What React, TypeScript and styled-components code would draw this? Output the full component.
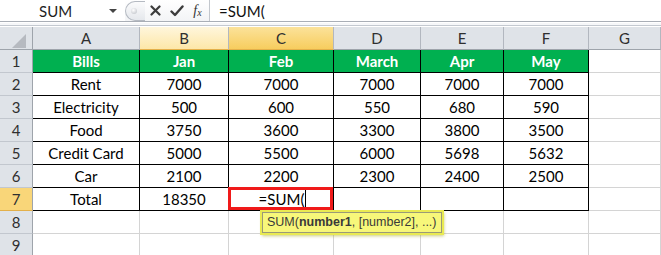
import * as React from 'react';
import styled, { createGlobalStyle, css } from 'styled-components';

const GlobalStyle = createGlobalStyle`
  html, body {
    margin: 0;
    padding: 0;
    background: #ffffff;
    overflow: hidden;
  }
  body {
    font-family: Lato, 'Liberation Sans', sans-serif;
  }
`;

const Wrapper = styled.div`
  width: 661px;
  height: 255px;
  overflow: hidden;
  background: #ffffff;
`;

const FormulaBar = styled.div`
  display: flex;
  align-items: stretch;
  height: 21px;
  border-bottom: 1px solid #a9aeb6;
  background: #ffffff;
`;

const NameBox = styled.div`
  width: 125px;
  display: flex;
  align-items: center;
  font-size: 15px;
  color: #1e1e1e;
`;

const NameText = styled.span`
  flex: 1;
  padding-left: 39px;
`;

const DropArrow = styled.span`
  width: 0;
  height: 0;
  border-left: 4px solid transparent;
  border-right: 4px solid transparent;
  border-top: 4px solid #444;
  margin-right: 8px;
`;

const Buttons = styled.div`
  width: 84px;
  display: flex;
  align-items: center;
  border-right: 1px solid #c3c7cd;
  background: linear-gradient(#ffffff, #f3f4f6);
`;

const Grip = styled.div`
  box-sizing: border-box;
  width: 20px;
  height: 20px;
  border: 1px solid #b5bac2;
  border-right: 0;
  border-radius: 10px 0 0 10px;
  display: flex;
  align-items: center;
  padding-left: 5px;
  background: linear-gradient(#fbfbfc, #e5e8ec);
`;

const Dot = styled.span`
  width: 6px;
  height: 6px;
  border-radius: 50%;
  background: radial-gradient(circle at 40% 35%, #ffffff, #b8bcc2);
`;

const IconBtn = styled.span`
  width: 21px;
  display: flex;
  align-items: center;
  justify-content: center;
  color: #3c3c3c;
`;

const Fx = styled.span`
  font-family: 'Liberation Serif', serif;
  font-style: italic;
  font-size: 14px;
  color: #333;
  line-height: 1;

  sub {
    font-size: 10px;
    vertical-align: -1px;
  }
`;

const FormulaText = styled.div`
  flex: 1;
  display: flex;
  align-items: center;
  padding-left: 9px;
  font-size: 15px;
  color: #111;
`;

const Band = styled.div`
  box-sizing: border-box;
  height: 3px;
  margin-top: 1px;
  border-bottom: 1px solid #c4c9d0;
  background: #f6f7f9;
`;

const Sheet = styled.div`
  display: grid;
  grid-template-columns: 33px 107px 89px 105px 87px 83px 85px 1fr;
  grid-auto-rows: 23px;
  margin-top: 1px;
`;

type HeadTone = 'plain' | 'hover' | 'active';

const toneBg = {
  plain: '#dfe3e8',
  hover: 'linear-gradient(#fff6dc, #fde7a8)',
  active: 'linear-gradient(#fbe29a, #f7cd5e)',
};

const ColHead = styled.div<{ $tone?: HeadTone }>`
  box-sizing: border-box;
  display: flex;
  align-items: center;
  justify-content: center;
  font-size: 15px;
  color: #2f2f2f;
  background: ${p => toneBg[p.$tone || 'plain']};
  border-right: 1px solid #b2b7bf;
  border-bottom: 1px solid ${p => (p.$tone && p.$tone !== 'plain' ? '#e3b04a' : '#9ea4ab')};
`;

const RowHead = styled(ColHead)`
  border-right: 1px solid #9ea4ab;
  border-bottom: 1px solid ${p => (p.$tone === 'active' ? '#e3b04a' : '#c2c7ce')};
  background: ${p => (p.$tone === 'active' ? '#f9d679' : '#dfe3e8')};
`;

const Corner = styled(ColHead)`
  border-right: 1px solid #9ea4ab;
`;

const CornerTriangle = styled.span`
  width: 0;
  height: 0;
  border-left: 14px solid transparent;
  border-bottom: 14px solid #b6bac0;
  margin: 6px 0 0 6px;
`;

type CellKind = 'empty' | 'head' | 'data';

const Cell = styled.div<{ $kind: CellKind; $selected?: boolean }>`
  box-sizing: border-box;
  display: flex;
  align-items: center;
  justify-content: center;
  font-size: 15px;
  color: #000;
  position: relative;
  border-right: 1px solid #d4d4d4;
  border-bottom: 1px solid #d4d4d4;

  ${p =>
    p.$kind === 'head' &&
    css`
      background: #00b050;
      color: #ffffff;
      font-weight: 700;
      border-right-color: #000;
      border-bottom-color: #000;
    `}

  ${p =>
    p.$kind === 'data' &&
    css`
      border-right-color: #000;
      border-bottom-color: #000;
    `}

  ${p =>
    p.$selected &&
    css`
      box-shadow: inset 0 0 0 3px #f01a1a;
      margin: -1px 0 0 -1px;
      padding-left: 4px;
    `}
`;

const Caret = styled.span`
  display: inline-block;
  width: 1px;
  height: 17px;
  background: #000;
  margin-left: 1px;
`;

const Tooltip = styled.div`
  position: absolute;
  top: 25px;
  left: 34px;
  z-index: 2;
  white-space: nowrap;
  font-family: 'Liberation Sans', Arial, sans-serif;
  font-size: 12.5px;
  color: #3a3a3a;
  background: #f7f77a;
  border: 1px solid #9a9a78;
  padding: 2px 4px 3px 4px;
  box-shadow: 0 0 0 2px #e9ea52, 1px 2px 3px 1px rgba(170, 170, 40, 0.6);

  b {
    font-weight: 700;
  }
`;

const cols = ['A', 'B', 'C', 'D', 'E', 'F', 'G'];

const table: string[][] = [
  ['Bills', 'Jan', 'Feb', 'March', 'Apr', 'May'],
  ['Rent', '7000', '7000', '7000', '7000', '7000'],
  ['Electricity', '500', '600', '550', '680', '590'],
  ['Food', '3750', '3600', '3300', '3800', '3500'],
  ['Credit Card', '5000', '5500', '6000', '5698', '5632'],
  ['Car', '2100', '2200', '2300', '2400', '2500'],
  ['Total', '18350', '', '', '', ''],
];

const colTone = (c: string): HeadTone => (c === 'B' ? 'hover' : c === 'C' ? 'active' : 'plain');

export default function App() {
  const rows = Array.from({ length: 9 }, (_, i) => i + 1);

  return (
    <Wrapper>
      <GlobalStyle />
      <FormulaBar>
        <NameBox>
          <NameText>SUM</NameText>
          <DropArrow />
        </NameBox>
        <Buttons>
          <Grip>
            <Dot />
          </Grip>
          <IconBtn>
            <svg width="11" height="11" viewBox="0 0 11 11">
              <path d="M1.5 1.5 L9.5 9.5 M9.5 1.5 L1.5 9.5" stroke="#3c3c3c" strokeWidth="2.2" strokeLinecap="round" />
            </svg>
          </IconBtn>
          <IconBtn>
            <svg width="14" height="12" viewBox="0 0 14 12">
              <path d="M1.5 6.5 L5 10 L12.5 1.5" fill="none" stroke="#3c3c3c" strokeWidth="2.4" strokeLinecap="round" strokeLinejoin="round" />
            </svg>
          </IconBtn>
          <IconBtn>
            <Fx>
              f<sub>x</sub>
            </Fx>
          </IconBtn>
        </Buttons>
        <FormulaText>=SUM(</FormulaText>
      </FormulaBar>
      <Band />
      <Sheet>
        <Corner>
          <CornerTriangle />
        </Corner>
        {cols.map(c => (
          <ColHead key={c} $tone={colTone(c)}>
            {c}
          </ColHead>
        ))}
        {rows.map(r => (
          <React.Fragment key={r}>
            <RowHead $tone={r === 7 ? 'active' : 'plain'}>{r}</RowHead>
            {cols.map((c, ci) => {
              const inTable = r <= 7 && ci < 6;
              const value = inTable ? table[r - 1][ci] : '';
              const kind: CellKind = !inTable ? 'empty' : r === 1 ? 'head' : 'data';
              if (r === 7 && c === 'C') {
                return (
                  <Cell key={c} $kind={kind} $selected>
                    =SUM(
                    <Caret />
                    <Tooltip>
                      SUM(<b>number1</b>, [number2], ...)
                    </Tooltip>
                  </Cell>
                );
              }
              return (
                <Cell key={c} $kind={kind}>
                  {value}
                </Cell>
              );
            })}
          </React.Fragment>
        ))}
      </Sheet>
    </Wrapper>
  );
}
